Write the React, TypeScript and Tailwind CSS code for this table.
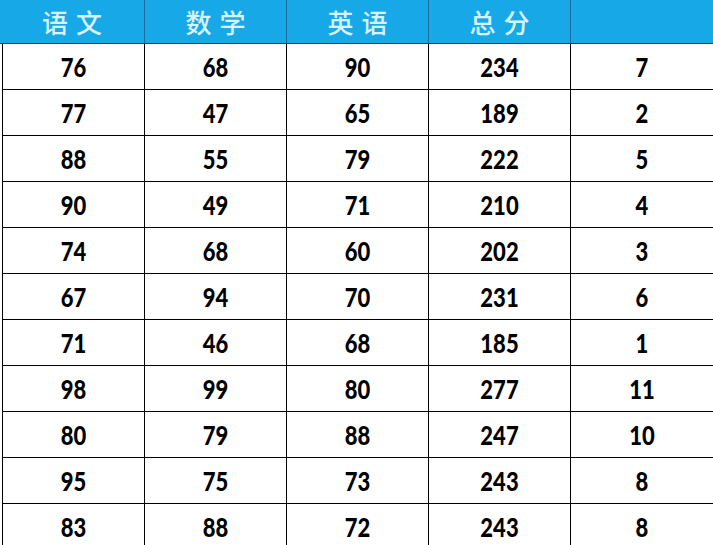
import React from "react";

const rows: (string)[][] = [
  ["76", "68", "90", "234", "7"],
  ["77", "47", "65", "189", "2"],
  ["88", "55", "79", "222", "5"],
  ["90", "49", "71", "210", "4"],
  ["74", "68", "60", "202", "3"],
  ["67", "94", "70", "231", "6"],
  ["71", "46", "68", "185", "1"],
  ["98", "99", "80", "277", "11"],
  ["80", "79", "88", "247", "10"],
  ["95", "75", "73", "243", "8"],
  ["83", "88", "72", "243", "8"],
];

const headers = ["语文", "数学", "英语", "总分", ""];

export default function App() {
  return (
    <div className="w-[713px] h-[545px] overflow-hidden bg-white">
      <div className="flex h-[44px] bg-[#17a8e7] border-b border-[#14425e]">
        {headers.map((h, i) => (
          <div
            key={i}
            className={`${i === 0 ? "w-[145px]" : "w-[142px]"} ${i < 4 ? "border-r border-[#1b6d9c]" : ""} flex items-center justify-center text-[26px] font-medium text-[#d6f3ff] tracking-[8px] pl-[8px]`}
            style={{ fontFamily: '"Noto Sans CJK SC", "Noto Sans", sans-serif' }}
          >
            {h}
          </div>
        ))}
      </div>
      <div className="pl-[2px]">
        {rows.map((r, ri) => (
          <div key={ri} className="flex h-[46px] border-b-[1.5px] border-black">
            {r.map((c, ci) => (
              <div
                key={ci}
                className={`${ci === 0 ? "w-[143px] border-l-[1.5px] border-r-[1.5px] border-black" : ci < 4 ? "w-[142px] border-r-[1.5px] border-black" : "w-[142px]"} flex items-center justify-center`}
              >
                <span
                  className="text-[22px] font-black text-black scale-y-[1.2] inline-block"
                  style={{ fontFamily: 'Lato, "Open Sans", sans-serif' }}
                >
                  {c}
                </span>
              </div>
            ))}
          </div>
        ))}
      </div>
    </div>
  );
}
